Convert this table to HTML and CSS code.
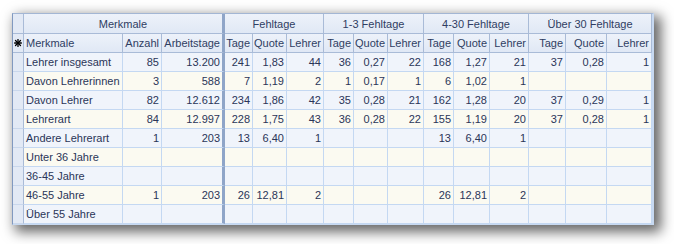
FILE: index.html
```html
<!DOCTYPE html>
<html>
<head>
<meta charset="utf-8">
<link rel="stylesheet" href="styles.css">
</head>
<body>
<div class="sheet">
  <div class="h1 rh"></div>
  <div class="h1 g span3 fz">Merkmale</div>
  <div class="h1 g span3">Fehltage</div>
  <div class="h1 g span3">1-3 Fehltage</div>
  <div class="h1 g span3">4-30 Fehltage</div>
  <div class="h1 g span3 last">Über 30 Fehltage</div>

  <div class="h2 rh star"><svg width="8" height="8" viewBox="0 0 8 8"><g stroke="#000" stroke-width="1.3" stroke-linecap="round"><line x1="4" y1="0.6" x2="4" y2="7.4"/><line x1="0.6" y1="4" x2="7.4" y2="4"/><line x1="1.5" y1="1.5" x2="6.5" y2="6.5"/><line x1="6.5" y1="1.5" x2="1.5" y2="6.5"/></g></svg></div>
  <div class="h2 l">Merkmale</div>
  <div class="h2">Anzahl</div>
  <div class="h2 fz">Arbeitstage</div>
  <div class="h2">Tage</div><div class="h2">Quote</div><div class="h2 gb">Lehrer</div>
  <div class="h2">Tage</div><div class="h2">Quote</div><div class="h2 gb">Lehrer</div>
  <div class="h2">Tage</div><div class="h2">Quote</div><div class="h2 gb">Lehrer</div>
  <div class="h2">Tage</div><div class="h2">Quote</div><div class="h2 last">Lehrer</div>

  <div class="rh"></div><div class="c a l">Lehrer insgesamt</div><div class="c a">85</div><div class="c a fz">13.200</div>
  <div class="c a">241</div><div class="c a">1,83</div><div class="c a">44</div>
  <div class="c a">36</div><div class="c a">0,27</div><div class="c a">22</div>
  <div class="c a">168</div><div class="c a">1,27</div><div class="c a">21</div>
  <div class="c a">37</div><div class="c a">0,28</div><div class="c a last">1</div>

  <div class="rh"></div><div class="c b l">Davon Lehrerinnen</div><div class="c b">3</div><div class="c b fz">588</div>
  <div class="c b">7</div><div class="c b">1,19</div><div class="c b">2</div>
  <div class="c b">1</div><div class="c b">0,17</div><div class="c b">1</div>
  <div class="c b">6</div><div class="c b">1,02</div><div class="c b">1</div>
  <div class="c b"></div><div class="c b"></div><div class="c b last"></div>

  <div class="rh"></div><div class="c a l">Davon Lehrer</div><div class="c a">82</div><div class="c a fz">12.612</div>
  <div class="c a">234</div><div class="c a">1,86</div><div class="c a">42</div>
  <div class="c a">35</div><div class="c a">0,28</div><div class="c a">21</div>
  <div class="c a">162</div><div class="c a">1,28</div><div class="c a">20</div>
  <div class="c a">37</div><div class="c a">0,29</div><div class="c a last">1</div>

  <div class="rh"></div><div class="c b l">Lehrerart</div><div class="c b">84</div><div class="c b fz">12.997</div>
  <div class="c b">228</div><div class="c b">1,75</div><div class="c b">43</div>
  <div class="c b">36</div><div class="c b">0,28</div><div class="c b">22</div>
  <div class="c b">155</div><div class="c b">1,19</div><div class="c b">20</div>
  <div class="c b">37</div><div class="c b">0,28</div><div class="c b last">1</div>

  <div class="rh"></div><div class="c a l">Andere Lehrerart</div><div class="c a">1</div><div class="c a fz">203</div>
  <div class="c a">13</div><div class="c a">6,40</div><div class="c a">1</div>
  <div class="c a"></div><div class="c a"></div><div class="c a"></div>
  <div class="c a">13</div><div class="c a">6,40</div><div class="c a">1</div>
  <div class="c a"></div><div class="c a"></div><div class="c a last"></div>

  <div class="rh"></div><div class="c b l">Unter 36 Jahre</div><div class="c b"></div><div class="c b fz"></div>
  <div class="c b"></div><div class="c b"></div><div class="c b"></div>
  <div class="c b"></div><div class="c b"></div><div class="c b"></div>
  <div class="c b"></div><div class="c b"></div><div class="c b"></div>
  <div class="c b"></div><div class="c b"></div><div class="c b last"></div>

  <div class="rh"></div><div class="c a l">36-45 Jahre</div><div class="c a"></div><div class="c a fz"></div>
  <div class="c a"></div><div class="c a"></div><div class="c a"></div>
  <div class="c a"></div><div class="c a"></div><div class="c a"></div>
  <div class="c a"></div><div class="c a"></div><div class="c a"></div>
  <div class="c a"></div><div class="c a"></div><div class="c a last"></div>

  <div class="rh"></div><div class="c b l">46-55 Jahre</div><div class="c b">1</div><div class="c b fz">203</div>
  <div class="c b">26</div><div class="c b">12,81</div><div class="c b">2</div>
  <div class="c b"></div><div class="c b"></div><div class="c b"></div>
  <div class="c b">26</div><div class="c b">12,81</div><div class="c b">2</div>
  <div class="c b"></div><div class="c b"></div><div class="c b last"></div>

  <div class="rh"></div><div class="c a l">Über 55 Jahre</div><div class="c a"></div><div class="c a fz"></div>
  <div class="c a"></div><div class="c a"></div><div class="c a"></div>
  <div class="c a"></div><div class="c a"></div><div class="c a"></div>
  <div class="c a"></div><div class="c a"></div><div class="c a"></div>
  <div class="c a"></div><div class="c a"></div><div class="c a last"></div>
</div>
</body>
</html>
```
FILE: styles.css
```css
html, body {
  margin: 0;
  padding: 0;
  background: #ffffff;
}
body {
  box-sizing: border-box;
  min-height: 244px;
  min-width: 674px;
  padding: 13px 0 20px 12px;
}
.sheet {
  display: grid;
  grid-template-columns: 11px 99px 39px 63px 28px 34px 37px 30px 34px 36px 30px 36px 39px 37px 41px 45px;
  grid-template-rows: 20px 19px repeat(9, 19px);
  width: max-content;
  border-left: 1px solid #8199c0;
  border-top: 1px solid #a3b6d4;
  border-right: 2px solid #c7d9f1;
  border-bottom: 1px solid #c7d9f1;
  box-shadow: 5px 5px 12px 2px rgba(0, 0, 0, 0.6);
  font-family: "Liberation Sans", Arial, sans-serif;
  font-size: 11px;
  color: #2a3558;
}
.sheet > div {
  box-sizing: border-box;
  overflow: hidden;
  white-space: nowrap;
}
.h1, .h2 {
  background: linear-gradient(#edf2fa, #e0e8f5);
  border-right: 1px solid #a9bbd7;
  border-bottom: 1px solid #a9bbd7;
  color: #2f3d62;
}
.h1 {
  line-height: 20px;
  text-align: center;
}
.h2 {
  line-height: 18px;
  text-align: right;
  padding-right: 2px;
}
.h2.l {
  text-align: left;
  padding-left: 2px;
}
.span3 {
  grid-column: span 3;
}
.rh {
  background: #e2e9f5;
  border-right: 1px solid #a9bbd7;
  border-bottom: 1px solid #c9d7ec;
}
.h1.rh, .h2.rh {
  border-bottom: 1px solid #a9bbd7;
}
.star {
  display: flex;
  align-items: center;
  justify-content: center;
  padding: 0;
}
.star svg {
  display: block;
}
.c {
  border-right: 1px solid #c4d8f2;
  border-bottom: 1px solid #c4d8f2;
  line-height: 18px;
  text-align: right;
  padding-right: 2px;
}
.c.l {
  text-align: left;
  padding-left: 2px;
}
.a {
  background: #f0f4fb;
}
.b {
  background: #fbfaf1;
}
.sheet > .fz {
  border-right: 3px solid #8fa5c8;
}
.sheet > .last {
  border-right-color: #c4d8f2;
}
.h1.last, .h2.last {
  border-right-color: #a9bbd7;
}
```
